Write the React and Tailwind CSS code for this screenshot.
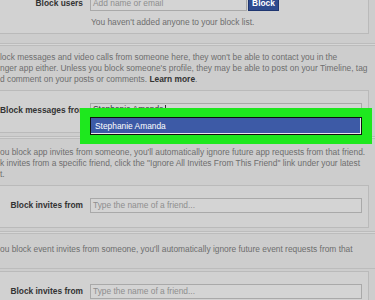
import React from 'react';

const Hr = ({ className }) => (
  <div className={`h-[3px] border-y border-[#bcbcbc] bg-[#d6d6d6] ${className}`} />
);

const Line = ({ children }) => <div className="whitespace-nowrap">{children}</div>;

function InviteRow({ label, className, children }) {
  return (
    <div
      className={`flex w-[369px] items-center border-y border-r border-[#bababa] bg-[#d1d1d1] pt-[12px] pb-[14px] ${className}`}
    >
      <div className="w-[83px] text-right font-bold whitespace-nowrap text-[#333]">{label}</div>
      <div className="relative ml-[7px] flex h-[15px] w-[272px] items-center border border-[#a9a9a9] bg-[#d4d4d4] px-[2px]">
        {children}
      </div>
    </div>
  );
}

export default function App() {
  return (
    <div
      className="h-[300px] w-[375px] overflow-hidden bg-[#cdcdcd] text-[8.4px] leading-[11px] text-[#6e6e6e]"
      style={{ fontFamily: '"Liberation Sans", Arial, sans-serif' }}
    >
      {/* block users */}
      <div className="-mt-[10px] w-[369px] border-r border-b border-[#bababa] bg-[#d2d2d2] pt-[6px] pb-[4px]">
        <div className="flex h-[15px] items-center">
          <div className="w-[83px] text-right font-bold whitespace-nowrap text-[#333]">Block users</div>
          <div className="ml-[7px] flex h-[15px] w-[157px] items-center border border-[#a9a9a9] bg-[#d4d4d4] px-[2px] text-[#8e8e8e]">
            Add name or email
          </div>
          <div className="ml-px flex h-[15px] w-[31px] items-center justify-center border border-[#1f3670] bg-[#2e4b8f] font-bold text-white">
            Block
          </div>
        </div>
        <div className="mt-[6px] ml-[91px] leading-[11.5px]">You haven't added anyone to your block list.</div>
      </div>

      <Hr className="mt-[9.5px]" />

      <div className="mt-[5.5px]">
        <Line>lock messages and video calls from someone here, they won't be able to contact you in the</Line>
        <Line>nger app either. Unless you block someone's profile, they may be able to post on your Timeline, tag</Line>
        <Line>
          d comment on your posts or comments. <span className="font-bold text-[#333]">Learn more</span>.
        </Line>
      </div>

      <InviteRow label="Block messages from" className="mt-[5.5px]">
        <div className="-mt-[3px] flex items-center">
          <span className="text-[#333]">Stephanie Amanda</span>
          <span className="ml-px h-[9px] w-px bg-[#333]" />
        </div>
        <div className="absolute top-[4px] left-[-11px] z-10 w-[292px] bg-[#1ee81e] px-[10px] py-[9px]">
          <div className="flex h-[18px] items-center border border-[#111] bg-[#3d5aa6] px-[4px] text-white shadow-[inset_-1px_-1px_0_#e8e8e8]">
            Stephanie Amanda
          </div>
        </div>
      </InviteRow>

      <Hr className="mt-[3px]" />

      <div className="mt-[7.5px]">
        <Line>ou block app invites from someone, you'll automatically ignore future app requests from that friend.</Line>
        <Line>k invites from a specific friend, click the "Ignore All Invites From This Friend" link under your latest</Line>
        <Line>t.</Line>
      </div>

      <InviteRow label="Block invites from" className="mt-[5.5px]">
        <span className="text-[#8e8e8e]">Type the name of a friend...</span>
      </InviteRow>

      <Hr className="mt-[3px]" />

      <div className="mt-[9.5px]">
        <Line>ou block event invites from someone, you'll automatically ignore future event requests from that</Line>
      </div>

      <div className="mt-[13.5px] h-px bg-[#bcbcbc]" />

      <InviteRow label="Block invites from" className="mt-[2px]">
        <span className="text-[#8e8e8e]">Type the name of a friend...</span>
      </InviteRow>
    </div>
  );
}
